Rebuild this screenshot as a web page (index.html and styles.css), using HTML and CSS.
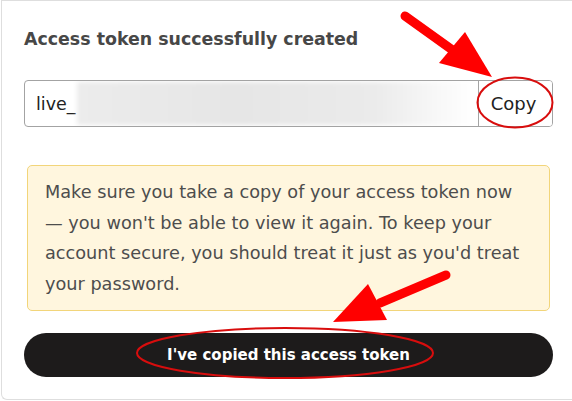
FILE: index.html
```html
<!DOCTYPE html>
<html lang="en">
<head>
<meta charset="utf-8">
<title>Access token created</title>
<link rel="stylesheet" href="styles.css">
</head>
<body>
<div class="card">
  <h2 class="title">Access token successfully created</h2>
  <div class="token-field">
    <div class="token-value">
      <span class="prefix">live_</span>
      <span class="blurred"></span>
    </div>
    <button class="copy-btn" type="button">Copy</button>
  </div>
  <div class="notice">
    Make sure you take a copy of your access token now — you won't be able to view it again. To keep your account secure, you should treat it just as you'd treat your password.
  </div>
  <button class="confirm-btn" type="button">I've copied this access token</button>
</div>
<svg class="annotations" width="572" height="401" viewBox="0 0 572 401">
  <g fill="#f00" stroke="none">
    <line x1="405" y1="16" x2="458" y2="54" stroke="#f00" stroke-width="9" stroke-linecap="round"/>
    <polygon points="439,63 465,32 492,77"/>
    <line x1="446" y1="275" x2="380" y2="303" stroke="#f00" stroke-width="9" stroke-linecap="round"/>
    <polygon points="368,284 387,320 333,322"/>
  </g>
  <ellipse cx="515" cy="102.5" rx="37.5" ry="25" fill="none" stroke="#d80d0d" stroke-width="2"/>
  <ellipse cx="285" cy="353" rx="148" ry="25" fill="none" stroke="#d80d0d" stroke-width="2"/>
</svg>
</body>
</html>
```
FILE: styles.css
```css
html, body {
  margin: 0;
  padding: 0;
  background: #ffffff;
  overflow: hidden;
}

body {
  width: 572px;
  height: 401px;
  position: relative;
  font-family: "DejaVu Sans", "Open Sans", sans-serif;
}

.card {
  box-sizing: border-box;
  margin-left: 1px;
  width: 571px;
  height: 400px;
  border: 1px solid #dedede;
  border-right: none;
  border-radius: 0 0 0 6px;
  padding: 26px 19px 0 22px;
  display: flex;
  flex-direction: column;
}

.title {
  margin: 0;
  font-size: 17.4px;
  line-height: 24px;
  font-weight: 700;
  color: #474747;
}

.token-field {
  margin-top: 29px;
  height: 47px;
  box-sizing: border-box;
  border: 1px solid #a3a3a3;
  border-radius: 4px;
  display: flex;
  overflow: hidden;
}

.token-value {
  flex: 1;
  display: flex;
  align-items: center;
  padding-left: 11px;
  position: relative;
}

.prefix {
  font-size: 17.5px;
  color: #222;
}

.blurred {
  position: absolute;
  left: 52px;
  top: 1px;
  bottom: 1px;
  right: 4px;
  background: linear-gradient(90deg, #ececec 0%, #e6e6e6 40%, #ebebeb 75%, #ffffff 100%);
  filter: blur(2px);
}

.copy-btn {
  width: 74px;
  border: none;
  border-left: 1px solid #a3a3a3;
  background: #ffffff;
  font-family: inherit;
  font-size: 18px;
  color: #222;
  padding: 0 4px 0 0;
}

.notice {
  margin: 38px 3px 0 3px;
  height: 146px;
  box-sizing: border-box;
  background: #fff6de;
  border: 1px solid #f2d57a;
  border-radius: 5px;
  padding: 11px 16px 0 17px;
  font-size: 17.7px;
  line-height: 30.5px;
  color: #4d4d4d;
}

.confirm-btn {
  margin-top: 22px;
  height: 44px;
  border: none;
  border-radius: 22px;
  background: #1d1b1b;
  color: #ffffff;
  font-family: inherit;
  font-size: 15px;
  font-weight: 700;
  padding: 0;
}

.annotations {
  position: absolute;
  left: 0;
  top: 0;
  pointer-events: none;
}
```
